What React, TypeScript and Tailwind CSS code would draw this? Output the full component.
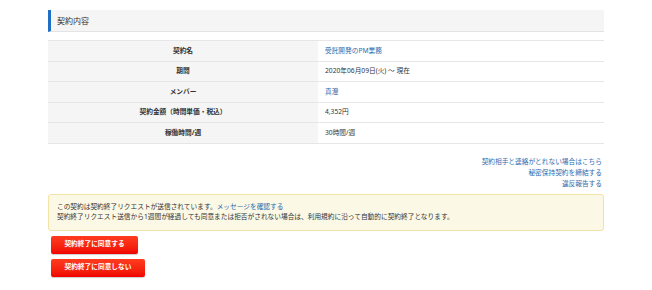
import React from 'react';

const rows: { label: string; value: string; link?: boolean }[] = [
  { label: '契約名', value: '受託開発のPM業務', link: true },
  { label: '期間', value: '2020年06月09日(火) 〜 現在' },
  { label: 'メンバー', value: '真澄', link: true },
  { label: '契約金額（時間単価・税込）', value: '4,352円' },
  { label: '稼働時間/週', value: '30時間/週' },
];

export default function App() {
  return (
    <div
      className="w-[652px] h-[290px] bg-white text-[#333] pt-[10px]"
      style={{ fontFamily: '"Noto Sans", "Noto Sans CJK JP", sans-serif' }}
    >
      <div className="ml-[48px] w-[556px]">
        <div className="h-[22px] flex items-center bg-[#f5f5f5] border-l-[3px] border-[#1f6fc5] border-b border-b-[#e3e3e3] pl-[6px] text-[8px]">
          契約内容
        </div>

        <table className="mt-[8px] w-full border-t border-[#e6e6e6] text-[6.7px] border-collapse">
          <tbody>
            {rows.map((r) => (
              <tr key={r.label} className="border-b border-[#e6e6e6] h-[20.5px]">
                <th className="w-[270px] bg-[#f5f5f5] font-bold text-center">{r.label}</th>
                <td className={`pl-[7px] ${r.link ? 'text-[#2b6cb0]' : 'text-[#333]'}`}>{r.value}</td>
              </tr>
            ))}
          </tbody>
        </table>

        <div className="mt-[12px] flex flex-col items-end pr-[2px] text-[6.7px] text-[#2b6cb0] leading-[11px]">
          <a>契約相手と連絡がとれない場合はこちら</a>
          <a>秘密保持契約を締結する</a>
          <a>違反報告する</a>
        </div>

        <div className="mt-[5px] bg-[#fbf8e6] border border-[#f1e4a6] rounded-[3px] pl-[8px] pt-[7px] pb-[7px] text-[6.7px] leading-[10.5px]">
          <div>
            この契約は契約終了リクエストが送信されています。
            <span className="text-[#2b6cb0]">メッセージを確認する</span>
          </div>
          <div>契約終了リクエスト送信から1週間が経過しても同意または拒否がされない場合は、利用規約に沿って自動的に契約終了となります。</div>
        </div>

        <div className="mt-[5px] ml-[3px] flex flex-col items-start gap-[5px]">
          <button className="h-[18px] w-[87px] rounded-[2px] bg-gradient-to-b from-[#ff3b1f] to-[#f00000] text-white font-bold text-[6.7px] shadow-[0_1px_1px_rgba(0,0,0,0.2)]">
            契約終了に同意する
          </button>
          <button className="h-[18px] w-[94px] rounded-[2px] bg-gradient-to-b from-[#ff3b1f] to-[#f00000] text-white font-bold text-[6.7px] shadow-[0_1px_1px_rgba(0,0,0,0.2)]">
            契約終了に同意しない
          </button>
        </div>
      </div>
    </div>
  );
}
